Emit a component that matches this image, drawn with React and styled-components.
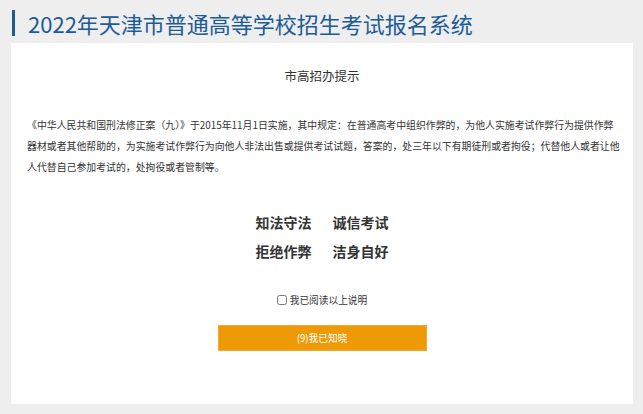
import React from "react";
import styled, { createGlobalStyle } from "styled-components";

const Global = createGlobalStyle`
  html, body { margin: 0; padding: 0; background: #eeeeee; }
  body { font-family: "Noto Sans CJK SC", "Noto Sans", sans-serif; color: #333; }
`;

const Page = styled.div`
  width: 643px;
  height: 414px;
  overflow: hidden;
  padding-top: 10px;
  box-sizing: border-box;
`;

const Header = styled.h1`
  margin: 0 0 0 12px;
  height: 26px;
  border-left: 3px solid #1d5b97;
  padding-left: 13px;
  font-size: 22px;
  line-height: 26px;
  font-weight: 400;
  color: #1d5b97;
  white-space: nowrap;
`;

const Panel = styled.main`
  margin: 7px 10px 0 11px;
  height: 361px;
  background: #fff;
  box-sizing: border-box;
  padding: 23px 0 0 16px;
  display: flex;
  flex-direction: column;
  align-items: stretch;
`;

const Notice = styled.h2`
  margin: 0;
  font-size: 12.5px;
  line-height: 20px;
  font-weight: 400;
  text-align: center;
  color: #333;
  padding-right: 16px;
`;

const Para = styled.p`
  margin: 28.5px 0 0;
  width: 593px;
  font-size: 9.9px;
  line-height: 21px;
  color: #333;
`;

const Slogans = styled.div`
  margin-top: 30px;
  display: grid;
  grid-template-columns: auto auto;
  justify-content: center;
  column-gap: 21px;
  padding-right: 16px;
`;

const Slogan = styled.span`
  font-size: 14px;
  line-height: 29px;
  font-weight: 700;
  color: #333;
`;

const CheckRow = styled.label`
  margin-top: 26.5px;
  display: flex;
  align-items: center;
  justify-content: center;
  gap: 3px;
  font-size: 9.7px;
  line-height: 16px;
  color: #333;
  padding-right: 16px;
`;

const Check = styled.input`
  width: 10px;
  height: 10px;
  margin: 0;
`;

const Button = styled.button`
  margin: 17px auto 0;
  position: relative;
  left: -8px;
  width: 209px;
  height: 26px;
  background: #ed9a06;
  border: 1px solid #f2a935;
  color: #fff;
  font-family: inherit;
  font-size: 9.7px;
  cursor: pointer;
  padding: 0;
`;

export default function App() {
  return (
    <>
      <Global />
      <Page>
        <Header>2022年天津市普通高等学校招生考试报名系统</Header>
        <Panel>
          <Notice>市高招办提示</Notice>
          <Para>
            《中华人民共和国刑法修正案（九）》于2015年11月1日实施，其中规定：在普通高考中组织作弊的，为他人实施考试作弊行为提供作弊器材或者其他帮助的，为实施考试作弊行为向他人非法出售或提供考试试题，答案的，处三年以下有期徒刑或者拘役；代替他人或者让他人代替自己参加考试的，处拘役或者管制等。
          </Para>
          <Slogans>
            <Slogan>知法守法</Slogan>
            <Slogan>诚信考试</Slogan>
            <Slogan>拒绝作弊</Slogan>
            <Slogan>洁身自好</Slogan>
          </Slogans>
          <CheckRow>
            <Check type="checkbox" />
            我已阅读以上说明
          </CheckRow>
          <Button>(9)我已知晓</Button>
        </Panel>
      </Page>
    </>
  );
}
